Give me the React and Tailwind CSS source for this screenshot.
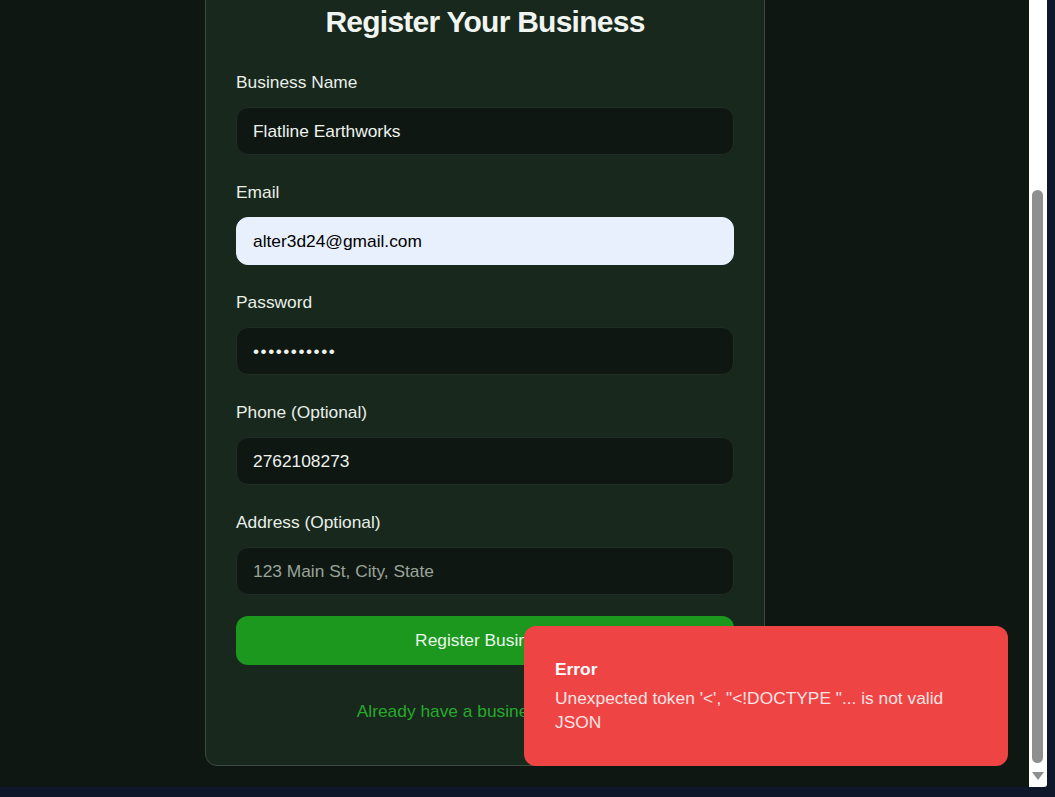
import React from "react";

const font = { fontFamily: '"Liberation Sans", Arial, sans-serif' };

function Field({ label, value, placeholder, type = "text", autofill = false }) {
  return (
    <div className="flex flex-col">
      <label className="text-[17.35px] leading-[24px] text-[#e8efe8] mb-[13px]">{label}</label>
      <input
        readOnly
        type={type}
        value={value}
        placeholder={placeholder}
        className={
          "h-[48px] w-full rounded-[12px] border px-4 text-[17.35px] outline-none " +
          (type === "password" ? "tracking-[1.5px] " : "") +
          (autofill
            ? "bg-[#e8f0fe] border-[#e8f0fe] text-black"
            : "bg-[#0f1712] border-[#1f2d23] text-[#eef3ee] placeholder:text-[#9aa49b]")
        }
        style={font}
      />
    </div>
  );
}

export default function App() {
  return (
    <div className="w-[1055px] h-[797px] bg-[#0f172a] overflow-hidden" style={font}>
      <div className="flex w-[1047px] h-[787px]">
        <div className="relative flex-1 bg-[#0f1712] overflow-hidden">
          <div className="ml-[205px] -mt-[27px] w-[560px] rounded-[12px] border border-[#3b4a3e] bg-[#18281c] px-[30px] pt-[30px] pb-[42px]">
            <h1 className="text-center text-[30px] leading-[36px] font-bold tracking-tight text-[#f1f5f1] mb-[30px]">
              Register Your Business
            </h1>
            <div className="flex flex-col gap-[25px]">
              <Field label="Business Name" value="Flatline Earthworks" />
              <Field label="Email" value="alter3d24@gmail.com" autofill />
              <Field label="Password" value="alter3d2400" type="password" />
              <Field label="Phone (Optional)" value="2762108273" />
              <Field label="Address (Optional)" value="" placeholder="123 Main St, City, State" />
            </div>
            <button className="mt-[21px] h-[49px] w-full rounded-[12px] bg-[#1c981f] text-[17.35px] text-[#eaf6ea]">
              Register Business
            </button>
            <p className="mt-[34px] text-center text-[17.35px] leading-[24px] text-[#27a82d]">
              Already have a business? Sign in
            </p>
          </div>

          <div className="absolute right-[21px] bottom-[21px] w-[484px] rounded-[12px] bg-[#ef4444] pl-[31px] pr-[31px] pt-[31px] pb-[32px]">
            <div className="text-[17.35px] leading-[24px] font-bold text-white mb-[5px]">Error</div>
            <div className="text-[17.35px] leading-[24px] text-[#fde3e3]">
              Unexpected token '&lt;', "&lt;!DOCTYPE "... is not valid JSON
            </div>
          </div>
        </div>
        <div className="relative w-[18px] h-[787px] bg-white rounded-br-[3px] flex flex-col items-center">
          <div className="mt-[190px] ml-[-1px] h-[573px] w-[11px] rounded-full bg-[#8f8f8f]" />
          <svg className="mt-[9px] ml-[-1px]" width="12" height="9" viewBox="0 0 12 9">
            <path d="M0 0 H12 L6 8 Z" fill="#8f8f8f" />
          </svg>
        </div>
      </div>
    </div>
  );
}
